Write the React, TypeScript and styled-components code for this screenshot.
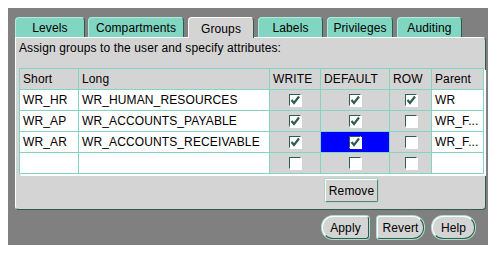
import styled, { createGlobalStyle } from 'styled-components'

const GlobalStyle = createGlobalStyle`
  body {
    margin: 8px;
    background: #ffffff;
    font-family: "Liberation Sans", Arial, sans-serif;
    font-size: 12px;
    letter-spacing: 0.12px;
    color: #000;
  }
`

const TEAL = '#80d6c0'
const DARK = '#2f5c4c'
const GRAY = '#d4d4d4'

const Frame = styled.div`
  width: 486px;
  height: 237px;
  box-sizing: border-box;
  background: #808080;
  padding: 9px 8px 0 7px;
  display: flex;
  flex-direction: column;
`
const TabBar = styled.div`
  display: flex;
  gap: 4px;
  height: 20px;
  position: relative;
  z-index: 1;
`
const Tab = styled.div<{ $w: number; $active?: boolean }>`
  width: ${p => p.$w}px;
  box-sizing: border-box;
  height: ${p => (p.$active ? 21 : 20)}px;
  display: flex;
  align-items: center;
  justify-content: center;
  background: ${p => (p.$active ? GRAY : TEAL)};
  border-top: 1px solid ${p => (p.$active ? '#ffffff' : '#b4eadc')};
  border-left: 1px solid ${p => (p.$active ? '#ffffff' : '#b4eadc')};
  border-right: 1px solid ${DARK};
  border-radius: 4px 4px 0 0;
  padding-top: 1px;
  &:first-child {
    margin-right: -1px;
  }
`
const Panel = styled.div`
  width: 471px;
  height: 173px;
  box-sizing: border-box;
  background: ${GRAY};
  border-top: 1px solid #ffffff;
  border-left: 1px solid #ffffff;
  border-right: 1px solid ${DARK};
  border-bottom: 1px solid ${DARK};
  border-radius: 0 4px 4px 4px;
  padding: 2px 0 0 3px;
  display: flex;
  flex-direction: column;
`
const Hint = styled.div`
  height: 16px;
  line-height: 16px;
`
const Table = styled.table`
  margin-top: 12px;
  border-collapse: collapse;
  table-layout: fixed;
  width: 464px;
  box-shadow: 1px 1px 0 #ffffff, 2px 2px 0 #ffffff;
`
const Th = styled.th<{ $w: number }>`
  width: ${p => p.$w}px;
  height: 20px;
  padding: 0 0 0 3px;
  background: ${GRAY};
  border: 1px solid ${TEAL};
  font-weight: normal;
  text-align: left;
  white-space: nowrap;
  overflow: hidden;
`
const Td = styled.td`
  height: 20px;
  padding: 0 0 0 3px;
  background: #ffffff;
  border: 1px solid ${TEAL};
  white-space: nowrap;
  overflow: hidden;
`
const CheckCell = styled.td<{ $selected?: boolean }>`
  height: 20px;
  padding: 0;
  background: ${p => (p.$selected ? '#0000ff' : GRAY)};
  border: 1px solid ${TEAL};
  text-align: center;
  vertical-align: middle;
`
const Box = styled.span`
  display: inline-block;
  width: 12px;
  height: 12px;
  box-sizing: border-box;
  background: #ffffff;
  border-top: 1px solid ${DARK};
  border-left: 1px solid ${DARK};
  border-right: 1px solid #ffffff;
  border-bottom: 1px solid #ffffff;
  box-shadow: 1px 1px 0 #ffffff;
  vertical-align: middle;
  position: relative;
  top: -1px;
`
const RemoveRow = styled.div`
  display: flex;
  padding-left: 306px;
  margin-top: 5px;
`
const RemoveButton = styled.button`
  width: 53px;
  height: 23px;
  box-sizing: border-box;
  background: ${GRAY};
  font-family: inherit;
  font-size: 12px;
  letter-spacing: inherit;
  padding: 0;
  border-top: 1px solid #ffffff;
  border-left: 1px solid #ffffff;
  border-right: 1px solid #6a7a74;
  border-bottom: 1px solid #6a7a74;
  border-radius: 2px;
  box-shadow: 0 0 0 1px #9fdcca;
`
const Actions = styled.div`
  display: flex;
  justify-content: flex-end;
  gap: 8px;
  margin-top: 6px;
  padding-right: 11px;
`
const ActionButton = styled.button<{ $w: number; $shape: string }>`
  width: ${p => p.$w}px;
  height: 23px;
  box-sizing: border-box;
  background: ${GRAY};
  font-family: inherit;
  font-size: 12px;
  letter-spacing: inherit;
  padding: 0;
  border-top: 1px solid #ffffff;
  border-left: 1px solid #ffffff;
  border-right: 1px solid ${DARK};
  border-bottom: 1px solid ${DARK};
  border-radius: ${p => p.$shape};
  box-shadow: 0 0 0 1px #a8e0d0;
`

function Check({ checked }: { checked: boolean }) {
  return (
    <Box>
      {checked && (
        <svg width="10" height="10" viewBox="0 0 10 10" style={{ position: 'absolute', left: 0, top: 0 }}>
          <path d="M1.5 5 L4 8 L9 1.5" fill="none" stroke="#2f5c4c" strokeWidth="2.2" />
        </svg>
      )}
    </Box>
  )
}

const tabs = [
  { label: 'Levels', w: 70 },
  { label: 'Compartments', w: 96 },
  { label: 'Groups', w: 66, active: true },
  { label: 'Labels', w: 65 },
  { label: 'Privileges', w: 66 },
  { label: 'Auditing', w: 65 },
]

const rows = [
  { short: 'WR_HR', long: 'WR_HUMAN_RESOURCES', write: true, def: true, row: true, parent: 'WR' },
  { short: 'WR_AP', long: 'WR_ACCOUNTS_PAYABLE', write: true, def: true, row: false, parent: 'WR_F...' },
  { short: 'WR_AR', long: 'WR_ACCOUNTS_RECEIVABLE', write: true, def: true, row: false, parent: 'WR_F...', selected: true },
]

export default function App() {
  return (
    <>
      <GlobalStyle />
      <Frame>
        <TabBar>
          {tabs.map(t => (
            <Tab key={t.label} $w={t.w} $active={t.active}>{t.label}</Tab>
          ))}
        </TabBar>
        <Panel>
          <Hint>Assign groups to the user and specify attributes:</Hint>
          <Table>
            <thead>
              <tr>
                <Th $w={55}>Short</Th>
                <Th $w={187}>Long</Th>
                <Th $w={47}>WRITE</Th>
                <Th $w={65}>DEFAULT</Th>
                <Th $w={38}>ROW</Th>
                <Th $w={48}>Parent</Th>
              </tr>
            </thead>
            <tbody>
              {rows.map(r => (
                <tr key={r.short}>
                  <Td>{r.short}</Td>
                  <Td>{r.long}</Td>
                  <CheckCell><Check checked={r.write} /></CheckCell>
                  <CheckCell $selected={r.selected}><Check checked={r.def} /></CheckCell>
                  <CheckCell><Check checked={r.row} /></CheckCell>
                  <Td>{r.parent}</Td>
                </tr>
              ))}
              <tr>
                <Td />
                <Td />
                <CheckCell><Check checked={false} /></CheckCell>
                <CheckCell><Check checked={false} /></CheckCell>
                <CheckCell><Check checked={false} /></CheckCell>
                <Td />
              </tr>
            </tbody>
          </Table>
          <RemoveRow>
            <RemoveButton>Remove</RemoveButton>
          </RemoveRow>
        </Panel>
        <Actions>
          <ActionButton $w={47} $shape="11px 3px 3px 11px">Apply</ActionButton>
          <ActionButton $w={47} $shape="3px 11px 11px 3px">Revert</ActionButton>
          <ActionButton $w={43} $shape="11px">Help</ActionButton>
        </Actions>
      </Frame>
    </>
  )
}
